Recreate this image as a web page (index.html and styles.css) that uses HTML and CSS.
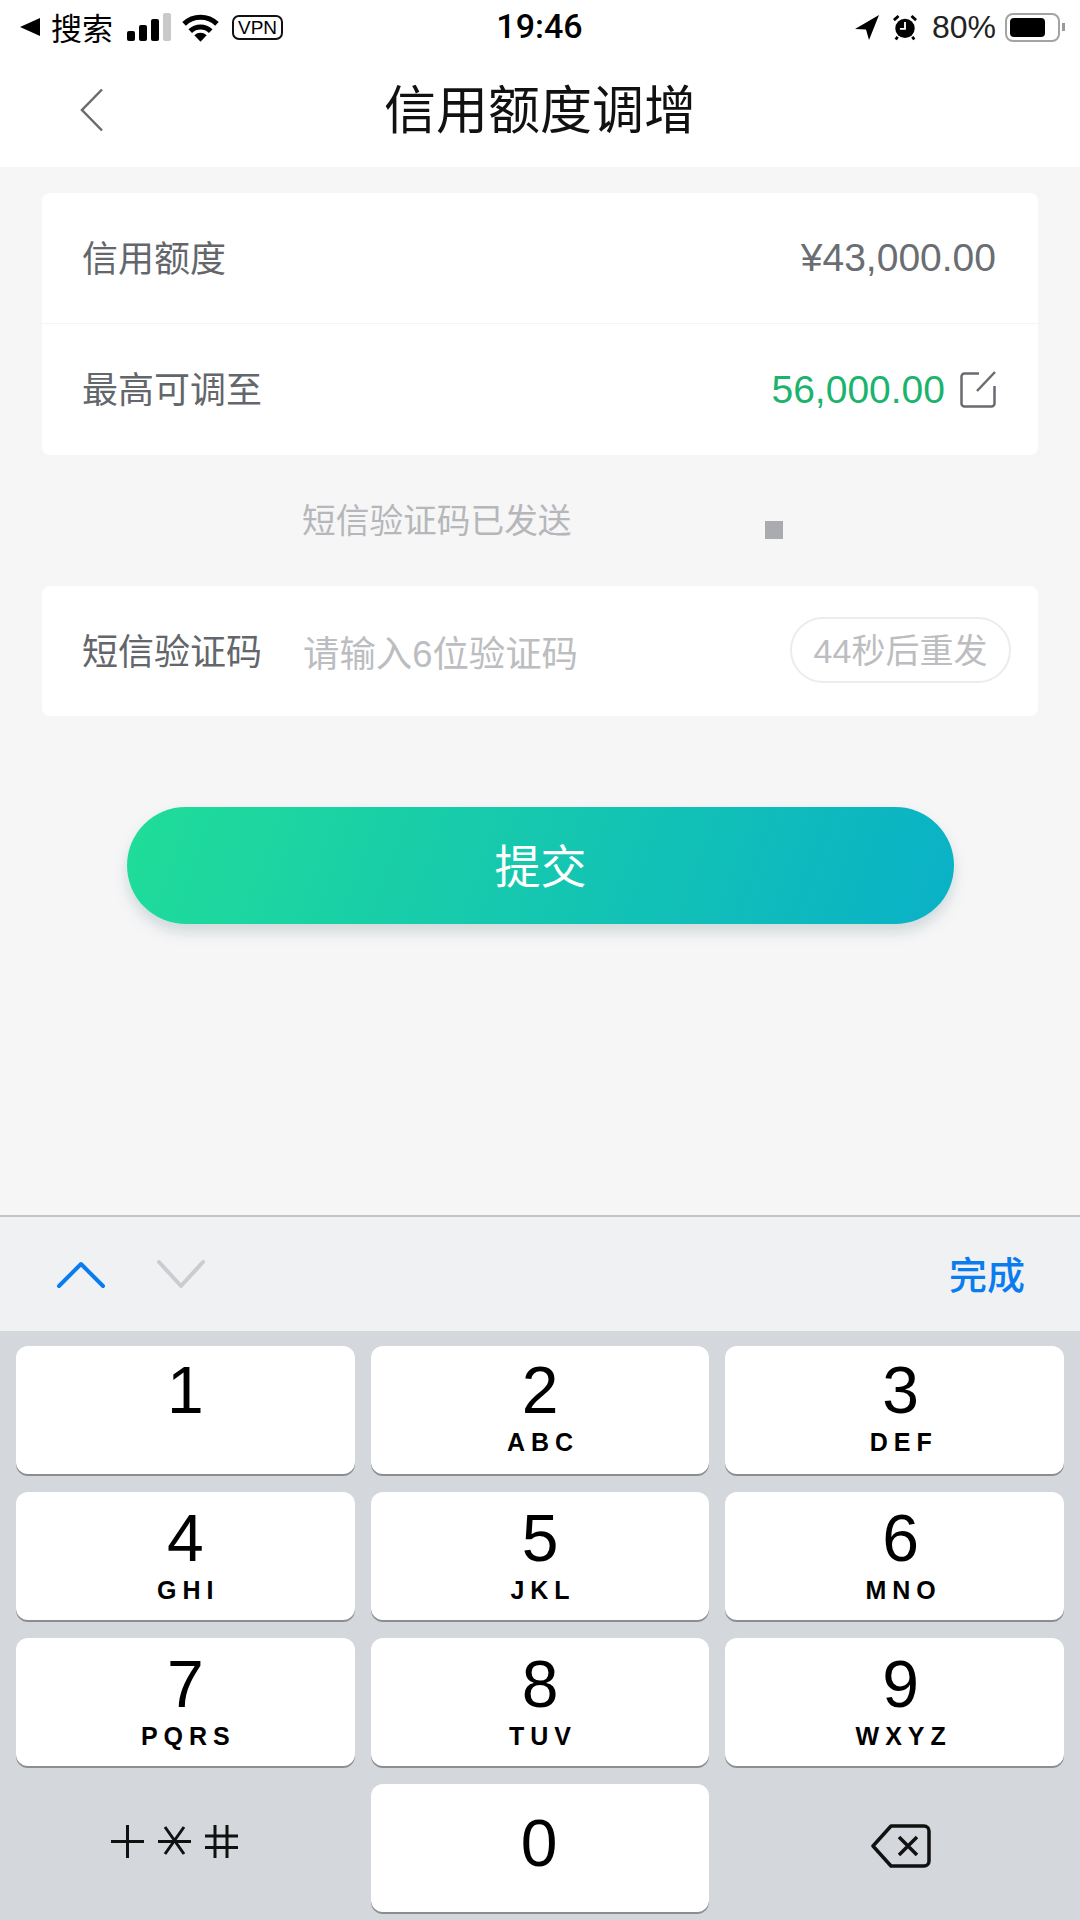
FILE: index.html
```html
<!doctype html>
<html lang="zh-CN">
  <head>
    <meta charset="utf-8">
    <title>信用额度调增</title>
    <link rel="stylesheet" href="styles.css">
  </head>
  <body>
    <div class="page">
      <div class="statusbar">
        <div class="status-left">
          <svg class="back-tri" width="20" height="20" viewBox="0 0 20 20"><path d="M0 10 20 1v18z" fill="#000"/></svg>
          <span class="status-app">搜索</span>
          <svg class="signal" width="44" height="28" viewBox="0 0 44 28">
            <rect x="0" y="18" width="8" height="10" rx="2" fill="#000"/>
            <rect x="12" y="12" width="8" height="16" rx="2" fill="#000"/>
            <rect x="24" y="6" width="8" height="22" rx="2" fill="#000"/>
            <rect x="36" y="0" width="8" height="28" rx="2" fill="#c9c9c9"/>
          </svg>
          <svg class="wifi" width="39" height="29" viewBox="0 0 38 28">
            <path d="M19 28 13 21.500a9 9 0 0 1 12 0z" fill="#000"/>
            <path d="M9 17.500a14.500 14.500 0 0 1 20 0M3 10.500a23 23 0 0 1 32 0" fill="none" stroke="#000" stroke-width="5"/>
          </svg>
          <span class="vpn">VPN</span>
        </div>
        <div class="status-time">19:46</div>
        <div class="status-right">
          <svg width="24" height="25" viewBox="0 0 24 25"><path d="M24 0 0 14l11 .5L14 25z" fill="#000"/></svg>
          <svg class="alarm" width="24" height="27" viewBox="0 0 26 28">
            <circle cx="13" cy="15" r="10.500" fill="#000"/>
            <path d="M13 8v7.500H7.500" fill="none" stroke="#fff" stroke-width="2"/>
            <path d="M1 6 6 1.500M25 6l-5-4.500M5 24l-2 3M21 24l2 3" stroke="#000" stroke-width="3"/>
          </svg>
          <span class="battery-pct">80%</span>
          <span class="battery"><span class="battery-fill"></span></span>
          <span class="battery-tip"></span>
        </div>
      </div>

      <div class="navbar">
        <svg class="nav-back" width="24" height="44" viewBox="0 0 24 44"><path d="M22 1.500 2 22l20 20.500" fill="none" stroke="#6b6b6b" stroke-width="2.500"/></svg>
        <h1 class="nav-title">信用额度调增</h1>
      </div>

      <main class="content">
        <section class="card">
          <div class="row row-split">
            <span class="label">信用额度</span>
            <span class="amount">¥43,000.00</span>
          </div>
          <div class="row">
            <span class="label">最高可调至</span>
            <span class="amount amount-green">56,000.00</span>
            <svg class="edit" width="38" height="38" viewBox="0 0 38 38">
              <path d="M20 2.500H5.500a3 3 0 0 0-3 3v27a3 3 0 0 0 3 3h27a3 3 0 0 0 3-3V15" fill="none" stroke="#686b70" stroke-width="2.500"/>
              <path d="M18 20 36 1" fill="none" stroke="#686b70" stroke-width="2.500"/>
            </svg>
          </div>
        </section>

        <div class="sms-hint">
          <span class="hint-text">短信验证码已发送</span>
          <span class="hint-dot"></span>
        </div>

        <section class="card">
          <div class="row row-code">
            <span class="label">短信验证码</span>
            <span class="placeholder">请输入6位验证码</span>
            <span class="resend"><span class="resend-text">44秒后重发</span></span>
          </div>
        </section>

        <button class="submit"><span class="submit-text">提交</span></button>
      </main>

      <div class="kb-toolbar">
        <svg width="50" height="30" viewBox="0 0 50 30"><path d="M3 27 25 5l22 22" fill="none" stroke="#0a7cf0" stroke-width="4" stroke-linecap="round" stroke-linejoin="round"/></svg>
        <svg class="kb-next" width="50" height="30" viewBox="0 0 50 30"><path d="M3 3l22 24L47 3" fill="none" stroke="#cbcccf" stroke-width="4" stroke-linecap="round" stroke-linejoin="round"/></svg>
        <span class="kb-done">完成</span>
      </div>

      <div class="keyboard">
        <div class="key"><span class="digit">1</span></div>
        <div class="key"><span class="digit">2</span><span class="letters">ABC</span></div>
        <div class="key"><span class="digit">3</span><span class="letters">DEF</span></div>
        <div class="key"><span class="digit">4</span><span class="letters">GHI</span></div>
        <div class="key"><span class="digit">5</span><span class="letters">JKL</span></div>
        <div class="key"><span class="digit">6</span><span class="letters">MNO</span></div>
        <div class="key"><span class="digit">7</span><span class="letters">PQRS</span></div>
        <div class="key"><span class="digit">8</span><span class="letters">TUV</span></div>
        <div class="key"><span class="digit">9</span><span class="letters">WXYZ</span></div>
        <div class="key key-flat key-symbols">
          <svg width="128" height="34" viewBox="0 0 128 34">
            <path d="M0 16.500h33M16.500 0v33" fill="none" stroke="#111" stroke-width="3"/>
            <path d="M47 16.500h33M54 29 73 2M73 29 54 2" fill="none" stroke="#111" stroke-width="3"/>
            <path d="M94 11h33M94 22.500h33M104 0v33M116 0v33" fill="none" stroke="#111" stroke-width="3"/>
          </svg>
        </div>
        <div class="key key-zero"><span class="digit">0</span></div>
        <div class="key key-flat key-delete">
          <svg width="60" height="44" viewBox="0 0 60 44">
            <path d="M20 2h33a5 5 0 0 1 5 5v30a5 5 0 0 1-5 5H20L2 22z" fill="none" stroke="#111" stroke-width="3.500" stroke-linejoin="round"/>
            <path d="M28 13l18 18M46 13 28 31" fill="none" stroke="#111" stroke-width="3.500"/>
          </svg>
        </div>
      </div>
    </div>
  </body>
</html>
```

FILE: styles.css
```css
html, body { margin: 0; padding: 0; height: 100%; }
body {
  background: #f6f6f7;
  font-family: "Liberation Sans", "Noto Sans CJK SC", sans-serif;
  color: #000;
}
.page {
  width: 1080px;
  height: 1920px;
  display: flex;
  flex-direction: column;
  overflow: hidden;
}

/* status bar */
.statusbar {
  height: 54px;
  background: #fff;
  display: grid;
  grid-template-columns: 1fr auto 1fr;
  align-items: center;
  box-sizing: border-box;
  padding: 0 15px 0 20px;
}
.status-left, .status-right { display: flex; align-items: center; }
.status-right { justify-content: flex-end; }
.status-app { font-size: 31px; margin: 0 0 2px 11px; }
.signal { margin-left: 14px; }
.wifi { margin-left: 10px; }
.vpn {
  margin-left: 12px;
  box-sizing: border-box;
  width: 51px;
  height: 25px;
  border: 2px solid #111;
  border-radius: 7px;
  font-size: 19px;
  line-height: 21px;
  text-align: center;
}
.status-time { font-family: Roboto, sans-serif; font-size: 34px; font-weight: 500; margin: 0 6px 2px 0; }
.alarm { margin-left: 14px; }
.battery-pct { font-size: 32px; margin-left: 15px; color: #222; }
.battery {
  margin-left: 9px;
  width: 55px;
  height: 29px;
  box-sizing: border-box;
  border: 2px solid #a3a3a3;
  border-radius: 8px;
  padding: 3px;
  display: flex;
}
.battery-fill { width: 35px; background: #000; border-radius: 4px; }
.battery-tip { width: 3px; height: 8px; margin-left: 2px; background: #9a9a9a; }

/* nav */
.navbar {
  height: 113px;
  background: #fff;
  display: flex;
  align-items: center;
  justify-content: center;
  position: relative;
}
.nav-back { position: absolute; left: 80px; top: 34px; }
.nav-title { margin: 0; font-size: 52px; font-weight: 400; line-height: 1; color: #111; }

/* form */
.content {
  flex: 1;
  padding: 26px 42px 0;
  display: flex;
  flex-direction: column;
}
.card { background: #fff; border-radius: 8px; }
.row {
  height: 131px;
  box-sizing: border-box;
  display: flex;
  align-items: center;
  padding: 0 41px 0 40px;
}
.row-split { border-bottom: 1px solid #f4f4f5; }
.label { font-size: 36px; color: #63666b; margin-bottom: 5px; }
.amount { font-size: 39px; color: #6a6d72; margin: 0 1px 0 auto; }
.amount-green { color: #1cb36d; }
.edit { margin-left: 13px; }
.sms-hint {
  height: 131px;
  display: flex;
  align-items: center;
  padding-left: 260px;
  font-size: 33.7px;
  color: #b5b7ba;
}
.hint-text { margin-bottom: 5px; }
.hint-dot {
  width: 18px;
  height: 18px;
  background: #a9abb0;
  margin: 18px 0 0 193px;
}
.row-code { height: 130px; padding-right: 27px; }
.placeholder { font-size: 36.4px; color: #bcbdc0; margin: 0 0 0 41px; }
.resend {
  margin: 0 0 2px auto;
  width: 221px;
  height: 66px;
  box-sizing: border-box;
  border: 2px solid #ececed;
  border-radius: 33px;
  display: flex;
  align-items: center;
  justify-content: center;
  font-size: 34px;
  color: #bcbdc0;
}
.resend-text { margin-bottom: 3px; }
.submit {
  width: 827px;
  height: 117px;
  margin: 91px 0 0 85px;
  border: 0;
  border-radius: 59px;
  background: linear-gradient(110deg, #20dd98 0%, #0ab1c7 100%);
  box-shadow: 0 8px 14px rgba(90, 130, 130, 0.25);
  color: #fff;
  font-family: inherit;
  font-size: 46px;
}
.submit-text { position: relative; top: -3px; }

/* keyboard */
.kb-toolbar {
  height: 114px;
  border-top: 2px solid #c4c5c7;
  background: #f0f1f3;
  display: flex;
  align-items: center;
  padding: 0 54px 0 56px;
}
.kb-next { margin-left: 50px; }
.kb-done { margin: 0 1px 4px auto; font-size: 38px; font-weight: 500; color: #0a7cf0; }
.keyboard {
  height: 589px;
  box-sizing: border-box;
  background: #d4d7dc;
  padding: 15px 16px 0;
  display: grid;
  grid-template-columns: repeat(3, 1fr);
  grid-template-rows: repeat(4, 128px);
  gap: 18px 16px;
}
.key {
  background: #fff;
  border-radius: 12px;
  box-shadow: 0 2px 0 #8b8d91;
  display: flex;
  flex-direction: column;
  align-items: center;
  padding-top: 9px;
  box-sizing: border-box;
}
.key:nth-child(n+4) { padding-top: 11px; }
.key:nth-child(3n) { padding-left: 12px; }
.digit { font-size: 66px; line-height: 70px; }
.letters { font-size: 25px; font-weight: 700; line-height: 28px; letter-spacing: 6px; margin: 3px -6px 0 0; }
.key:nth-child(n).key-zero { justify-content: center; padding: 0 2px 10px 0; }
.key:nth-child(n).key-flat {
  background: none;
  box-shadow: none;
  padding: 0;
  justify-content: center;
}
.key:nth-child(n).key-symbols { padding: 0 20px 12px 0; }
.key:nth-child(n).key-delete { padding: 0 0 4px 12px; }
```
